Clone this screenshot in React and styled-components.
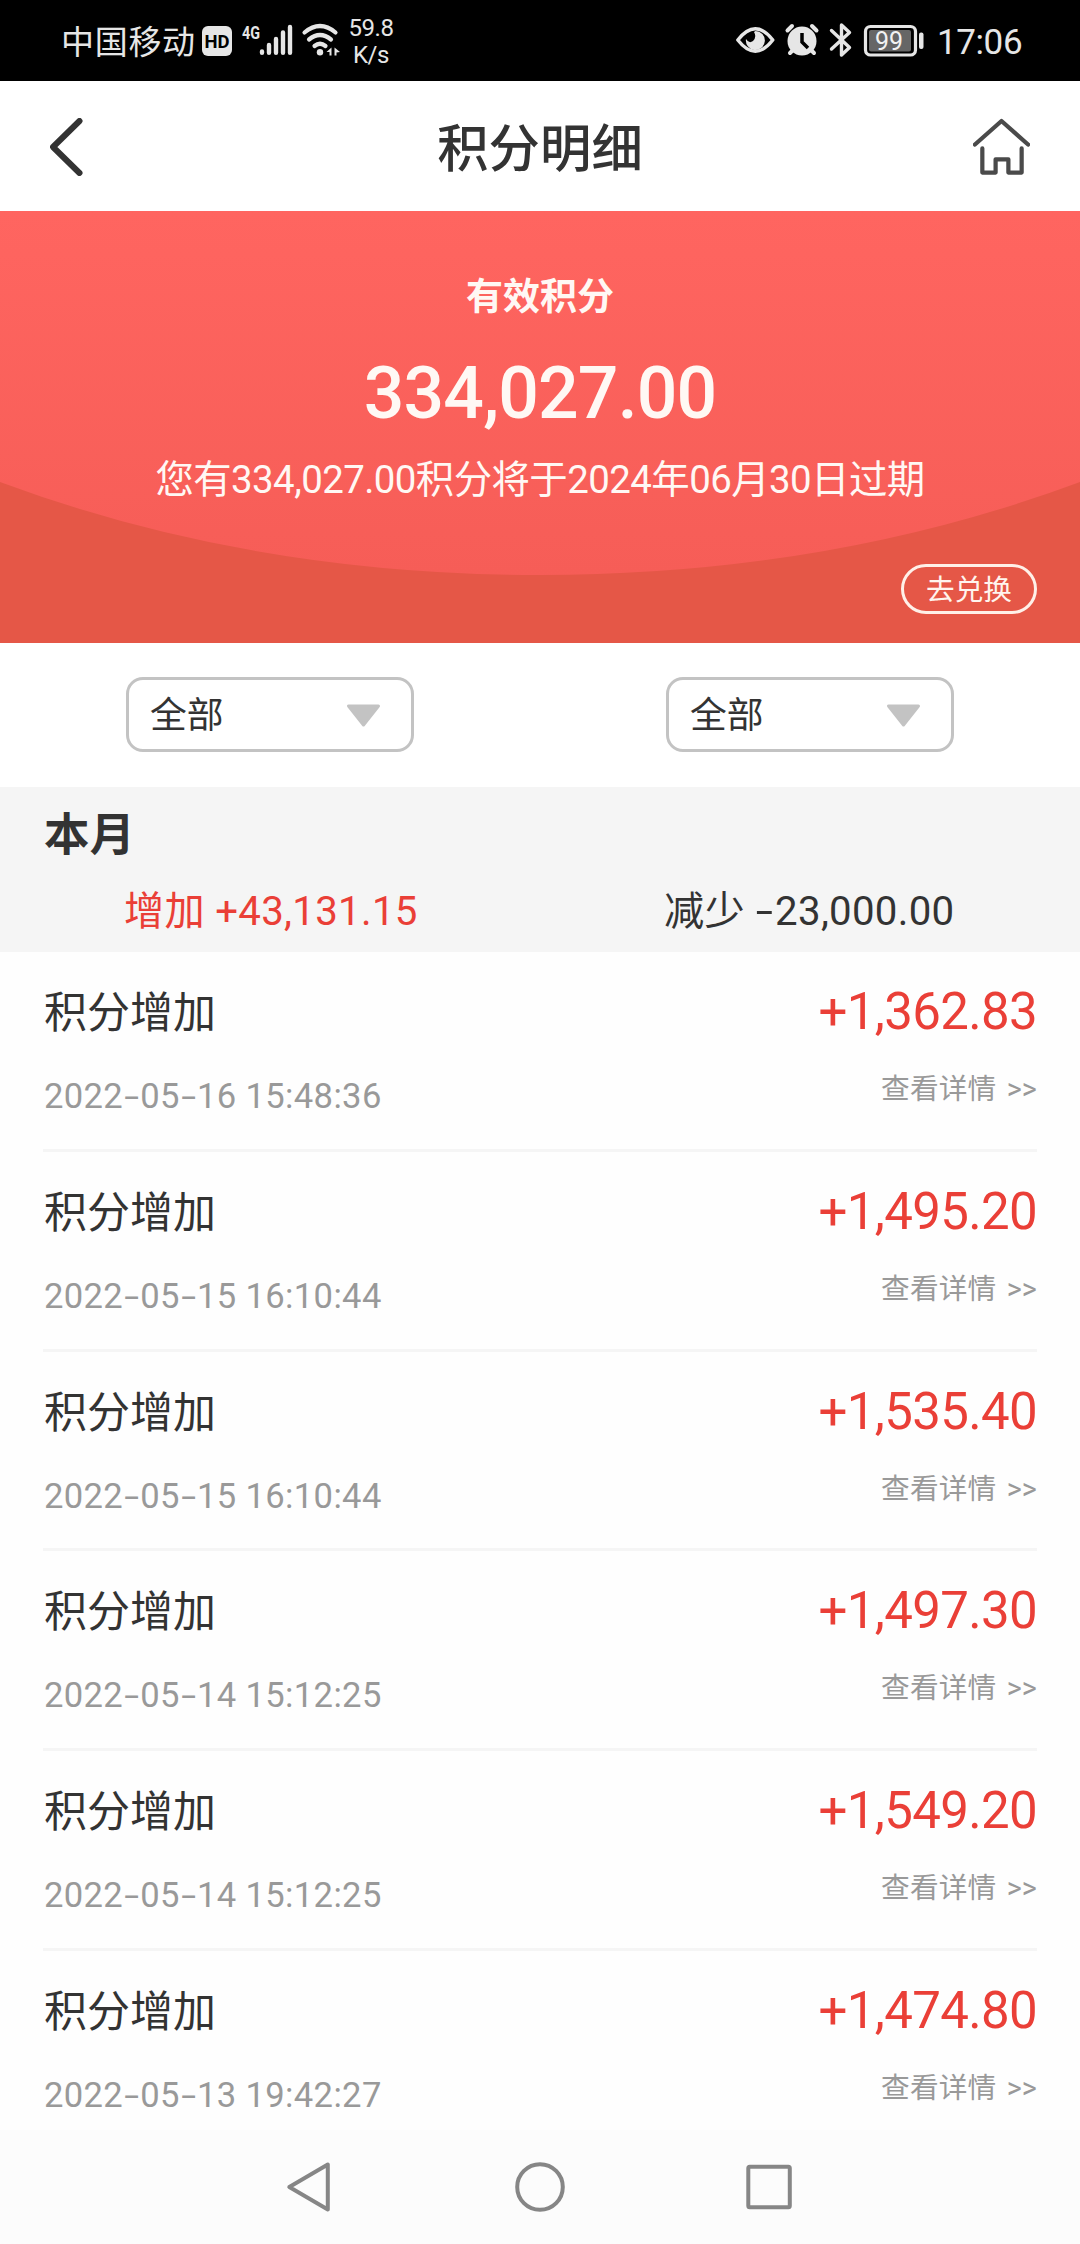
import React from 'react';
import styled, { createGlobalStyle } from 'styled-components';

const GlobalStyle = createGlobalStyle`
	* {
		box-sizing: border-box;
	}

	body {
		margin: 0;
		background: #fff;
		color: #333;
		font-family: Roboto, "Noto Sans CJK SC", sans-serif;
	}
`;

const Screen = styled.div`
	display: flex;
	flex-direction: column;
	width: 1080px;
	height: 2244px;
	overflow: hidden;
	background: #fefefe;
`;

/* status bar */
const StatusBar = styled.div`
	display: flex;
	flex: none;
	justify-content: space-between;
	height: 81px;
	padding: 0 59px 0 61px;
	background: #000;
	color: #e6e6e6;
`;

const StatusGroup = styled.div`
	display: flex;
	align-items: center;
	height: 81px;
`;

const Carrier = styled.span`
	width: 140px;
	font-size: 33px;
	line-height: 40px;
	letter-spacing: 0.7px;
	margin-top: 5px;
	white-space: nowrap;
`;

const Speed = styled.div`
	width: 50px;
	margin-left: 2px;
	margin-top: 2px;
	font-size: 24px;
	line-height: 27px;
	letter-spacing: -0.4px;
	text-align: center;
	white-space: nowrap;
`;

const Clock = styled.span`
	width: 84px;
	margin-left: 13px;
	margin-top: 4px;
	font-size: 35px;
	line-height: 40px;
	letter-spacing: -0.4px;
	white-space: nowrap;
`;

const StatusIcon = styled.svg`
	display: block;
	flex: none;
`;

/* title bar */
const NavBar = styled.div`
	display: flex;
	flex: none;
	align-items: center;
	justify-content: space-between;
	height: 130px;
	padding: 0 50px;
	background: #fff;
`;

const Title = styled.h1`
	margin: 8px 0 0;
	font-size: 51.4px;
	font-weight: 500;
	line-height: 70px;
`;

const NavButton = styled.button`
	display: flex;
	width: 57px;
	margin: 2px 0 0;
	padding: 0;
	border: 0;
	background: none;
	justify-content: ${props => props.align};
`;

/* points banner */
const Banner = styled.section`
	display: flex;
	flex: none;
	flex-direction: column;
	align-items: center;
	position: relative;
	height: 432px;
	padding-top: 61px;
	overflow: hidden;
	background: #e55747;
	color: #fff8f4;
	text-align: center;
	white-space: nowrap;
`;

const BannerCurve = styled.svg`
	position: absolute;
	top: 0;
	left: 0;
`;

const BannerLabel = styled.div`
	position: relative;
	font-size: 37px;
	font-weight: 700;
	line-height: 52px;
`;

const BannerTotal = styled.div`
	position: relative;
	margin-top: 28px;
	font-size: 71.5px;
	font-weight: 500;
	line-height: 84px;
	letter-spacing: -0.85px;
`;

const BannerNote = styled.div`
	position: relative;
	margin-top: 18px;
	font-size: 38.4px;
	line-height: 52px;
	letter-spacing: -0.55px;
`;

const ExchangeButton = styled.button`
	position: relative;
	align-self: flex-end;
	width: 136px;
	height: 50px;
	margin: 58px 43px 0 0;
	padding: 2px 0 0;
	border: 3px solid #fff0e8;
	border-radius: 25px;
	background: none;
	color: #fff4ee;
	font-family: inherit;
	font-size: 28.6px;
	line-height: 42px;
`;

/* filters */
const Filters = styled.div`
	display: grid;
	flex: none;
	grid-template-columns: 1fr 1fr;
	justify-items: center;
	height: 144px;
	padding-top: 34px;
	background: #fff;
`;

const Select = styled.div`
	display: flex;
	align-items: center;
	justify-content: space-between;
	width: 288px;
	height: 75px;
	padding: 2px 30px 0 21px;
	border: 3px solid #c3c3c3;
	border-radius: 17px;
	font-size: 36.8px;
	line-height: 50px;
`;

/* month summary */
const Summary = styled.section`
	flex: none;
	height: 165px;
	padding-top: 19px;
	background: #f5f5f5;
`;

const Month = styled.h2`
	margin: 0 0 0 44px;
	font-size: 45.4px;
	font-weight: 700;
	line-height: 60px;
`;

const Totals = styled.div`
	display: grid;
	grid-template-columns: 1fr 1fr;
	padding-top: 18px;
`;

const Total = styled.div`
	padding-left: 124px;
	color: ${props => props.color};
	font-size: 40.2px;
	line-height: 56px;
	letter-spacing: 0.3px;
	white-space: nowrap;
`;

/* the hyphen between figures is as wide as an en dash */
const Dash = styled.span`
	display: inline-block;
	margin: 0 0.105em;
	transform: scaleX(1.55);
`;

/* records */
const List = styled.ul`
	flex: 1;
	min-height: 0;
	margin: 0;
	padding: 0 43px;
	overflow: hidden;
	list-style: none;
`;

const Record = styled.li`
	display: flex;
	justify-content: space-between;
	height: 199.8px;
	padding: 30px 0 0 1px;
	border-bottom: 3px solid #f5f5f5;
	white-space: nowrap;
`;

const Side = styled.div`
	display: flex;
	flex-direction: column;
	align-items: ${props => props.align || 'flex-start'};
`;

const RecordName = styled.div`
	padding-top: 1px;
	font-size: 43px;
	line-height: 60px;
`;

const RecordTime = styled.div`
	margin-top: 23px;
	color: #999;
	font-size: 34.6px;
	line-height: 60px;
	letter-spacing: 0.35px;
`;

const Amount = styled.div`
	color: #ea3f37;
	font-size: 51px;
	line-height: 60px;
	letter-spacing: -0.65px;
`;

const Detail = styled.a`
	margin-top: 17px;
	color: #999;
	font-size: 28.7px;
	line-height: 60px;
	letter-spacing: 0.15px;
	word-spacing: 3px;
`;

/* system navigation */
const SystemNav = styled.nav`
	display: flex;
	flex: none;
	align-items: center;
	justify-content: center;
	gap: 169px;
	height: 114px;
	padding-bottom: 1px;
	background: #fcfcfc;
`;

const records = [
	{ time: '2022-05-16 15:48:36', amount: '+1,362.83' },
	{ time: '2022-05-15 16:10:44', amount: '+1,495.20' },
	{ time: '2022-05-15 16:10:44', amount: '+1,535.40' },
	{ time: '2022-05-14 15:12:25', amount: '+1,497.30' },
	{ time: '2022-05-14 15:12:25', amount: '+1,549.20' },
	{ time: '2022-05-13 19:42:27', amount: '+1,474.80' },
];

const Figures = ({ value }) => value.split('-').map((part, index) => (
	<React.Fragment key={index}>
		{index > 0 && <Dash>-</Dash>}
		{part}
	</React.Fragment>
));

const SignalIcons = () => (
	<StatusIcon width="143" height="81" viewBox="200 0 143 81">
		<rect x="201" y="26" width="30" height="30" rx="6" fill="#e6e6e6" />
		<text x="216" y="47.7" textAnchor="middle" fontSize="18.5" fontWeight="700" fill="#000">HD</text>
		<text x="241" y="38.500" fontSize="19" fontWeight="700" fill="#e6e6e6" textLength="18" lengthAdjust="spacingAndGlyphs">4G</text>
		<g stroke="#e6e6e6" strokeWidth="4.400" strokeLinecap="round">
			<path d="M261 51.500v1.300M268 45v7.800M275 39v13.800M282 32.500v20.300M289 27v25.800" />
		</g>
		<g fill="none" stroke="#e6e6e6" strokeWidth="4.200" strokeLinecap="round">
			<path d="M303.500 32.500q15.500-13 31 0M308 39.500q11-9 22 0M313.500 46q5.500-4.500 11 0" />
		</g>
		<circle cx="319" cy="52.300" r="3.200" fill="#e6e6e6" />
		<path d="M325.500 52l5-4.500v8h-2V52zM333.500 47.500l5.500 4.500-3.500 0.500v3h-2z" fill="#e6e6e6" />
	</StatusIcon>
);

const DeviceIcons = () => (
	<StatusIcon width="190" height="81" viewBox="735 0 190 81">
		<path d="M738.800 40q17.500-22.500 35 0q-17.500 22.500-35 0z" fill="none" stroke="#e6e6e6" strokeWidth="3.400" strokeLinejoin="round" />
		<path d="M756.500 31a9.500 9.500 0 1 1-9.500 8q3 5 7 2q4-4 1-9z" fill="#e6e6e6" />
		<circle cx="803" cy="41" r="14.500" fill="#e6e6e6" />
		<path d="M788.500 30.500l4.500-4.500M817.500 30.500l-4.500-4.500M791 53l4-4M815 53l-4-4" stroke="#e6e6e6" strokeWidth="4" strokeLinecap="round" />
		<path d="M803 33v9l6 6" fill="none" stroke="#000" strokeWidth="3.500" />
		<path d="M832.500 30.500l18 17-8 7.500V25l8 7.500-18 16.500" fill="none" stroke="#e6e6e6" strokeWidth="3.400" strokeLinejoin="round" strokeLinecap="round" />
		<rect x="866.500" y="26.500" width="50" height="28.500" rx="5" fill="none" stroke="#e6e6e6" strokeWidth="3.200" />
		<rect x="870" y="30" width="42" height="21.500" rx="2" fill="#666" />
		<rect x="920" y="32.500" width="4.500" height="16.500" rx="2" fill="#e6e6e6" />
		<text x="890" y="50" textAnchor="middle" fontSize="26" fill="#f2f2f2" textLength="28" lengthAdjust="spacingAndGlyphs">99</text>
	</StatusIcon>
);

const BackIcon = () => (
	<svg width="34" height="58" viewBox="0 0 34 58">
		<path d="M29.500 3L3 29l26.500 26" fill="none" stroke="#333" strokeWidth="6" strokeLinecap="round" strokeLinejoin="round" />
	</svg>
);

const HomeIcon = () => (
	<svg width="58" height="58" viewBox="0 0 58 58">
		<path d="M2 26.500L29 2.500l27 24M9.500 30.500V55H23V41.500h13V55h13.500V30.500" fill="none" stroke="#4a4a4a" strokeWidth="4.300" strokeLinecap="round" strokeLinejoin="round" />
	</svg>
);

const Caret = () => (
	<svg width="35" height="24" viewBox="0 0 35 24">
		<path d="M2.500 2h30L17.500 21z" fill="#c3c3c3" stroke="#c3c3c3" strokeWidth="3" strokeLinejoin="round" />
	</svg>
);

const App = () => {
	return (
		<Screen>
			<GlobalStyle />
			<StatusBar>
				<StatusGroup>
					<Carrier>中国移动</Carrier>
					<SignalIcons />
					<Speed>59.8<br />K/s</Speed>
				</StatusGroup>
				<StatusGroup>
					<DeviceIcons />
					<Clock>17:06</Clock>
				</StatusGroup>
			</StatusBar>
			<NavBar>
				<NavButton align="flex-start"><BackIcon /></NavButton>
				<Title>积分明细</Title>
				<NavButton align="flex-end"><HomeIcon /></NavButton>
			</NavBar>
			<Banner>
				<BannerCurve width="1080" height="432" viewBox="0 0 1080 432">
					<defs>
						<linearGradient id="banner" x1="0" y1="0" x2="0" y2="1">
							<stop offset="0" stopColor="#ff6560" />
							<stop offset="1" stopColor="#f65d57" />
						</linearGradient>
					</defs>
					<path d="M0 0H1080V271Q830 364 540 364T0 271z" fill="url(#banner)" />
				</BannerCurve>
				<BannerLabel>有效积分</BannerLabel>
				<BannerTotal>334,027.00</BannerTotal>
				<BannerNote>您有334,027.00积分将于2024年06月30日过期</BannerNote>
				<ExchangeButton>去兑换</ExchangeButton>
			</Banner>
			<Filters>
				<Select>全部<Caret /></Select>
				<Select>全部<Caret /></Select>
			</Filters>
			<Summary>
				<Month>本月</Month>
				<Totals>
					<Total color="#ea3f37">增加 +43,131.15</Total>
					<Total color="#333">减少 <Figures value="-23,000.00" /></Total>
				</Totals>
			</Summary>
			<List>
				{records.map((record, index) => (
					<Record key={index}>
						<Side>
							<RecordName>积分增加</RecordName>
							<RecordTime><Figures value={record.time} /></RecordTime>
						</Side>
						<Side align="flex-end">
							<Amount>{record.amount}</Amount>
							<Detail>查看详情 &gt;&gt;</Detail>
						</Side>
					</Record>
				))}
			</List>
			<SystemNav>
				<svg width="60" height="60" viewBox="0 0 60 60">
					<path d="M46.800 7.500v45L8.300 30z" fill="none" stroke="#868686" strokeWidth="4" strokeLinejoin="round" />
				</svg>
				<svg width="60" height="60" viewBox="0 0 60 60">
					<circle cx="30" cy="30" r="22.800" fill="none" stroke="#868686" strokeWidth="4" />
				</svg>
				<svg width="60" height="60" viewBox="0 0 60 60">
					<rect x="9.300" y="9.700" width="41.500" height="40.600" rx="1.500" fill="none" stroke="#868686" strokeWidth="4" />
				</svg>
			</SystemNav>
		</Screen>
	);
};

export default App;
